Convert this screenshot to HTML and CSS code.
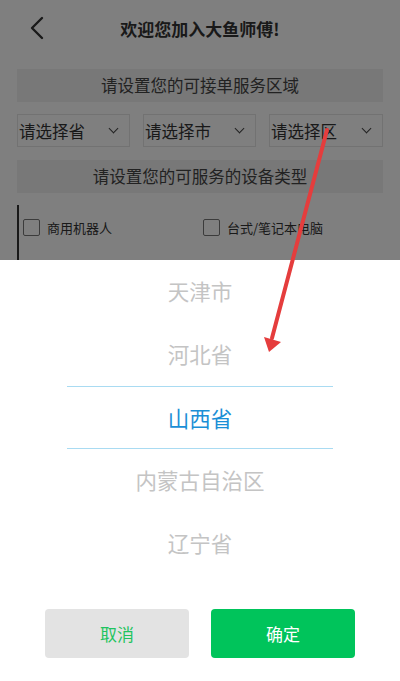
FILE: index.html
```html
<!DOCTYPE html>
<html lang="zh-CN">
<head>
    <meta charset="UTF-8">
    <meta name="viewport" content="width=device-width, initial-scale=1.0">
    <title>欢迎您加入大鱼师傅</title>
    <link rel="stylesheet" href="styles.css">
</head>
<body>
    <div class="page">
        <div class="topbar">
            <svg class="back" width="24" height="24" viewBox="0 0 24 24">
                <path d="M17 2 L7 12 L17 22" fill="none" stroke="#333" stroke-width="2.4" stroke-linecap="round" stroke-linejoin="round"/>
            </svg>
            <h1>欢迎您加入大鱼师傅!</h1>
        </div>
        <div class="content">
            <div class="section-title">请设置您的可接单服务区域</div>
            <div class="selects">
                <div class="select"><span>请选择省</span><i class="arrow"></i></div>
                <div class="select"><span>请选择市</span><i class="arrow"></i></div>
                <div class="select"><span>请选择区</span><i class="arrow"></i></div>
            </div>
            <div class="section-title">请设置您的可服务的设备类型</div>
            <div class="devices">
                <label class="check"><span class="box"></span>商用机器人</label>
                <label class="check"><span class="box"></span>台式/笔记本电脑</label>
            </div>
        </div>
    </div>

    <!-- 遮罩 + 底部选择器 -->
    <div class="mask"></div>
    <div class="sheet">
        <ul class="wheel">
            <li>天津市</li>
            <li>河北省</li>
            <li class="active">山西省</li>
            <li>内蒙古自治区</li>
            <li>辽宁省</li>
        </ul>
        <div class="buttons">
            <button class="btn cancel">取消</button>
            <button class="btn ok">确定</button>
        </div>
    </div>

    <svg class="pointer" width="400" height="681" viewBox="0 0 400 681">
        <line x1="327" y1="130" x2="272" y2="338" stroke="#e53d3d" stroke-width="4" stroke-linecap="round"/>
        <polygon points="264,337 281,342 269,352" fill="#e53d3d"/>
    </svg>
</body>
</html>
```

FILE: styles.css
```css
body {
    margin: 0;
    padding: 0;
    font-family: "Noto Sans CJK SC", "Noto Sans", sans-serif;
    background-color: #fff;
    color: #333;
    height: 681px;
    overflow: hidden;
}
.topbar {
    height: 56px;
    display: flex;
    align-items: center;
    justify-content: center;
    position: relative;
}
.topbar .back {
    position: absolute;
    left: 25px;
    top: 16px;
}
.topbar h1 {
    margin: 0;
    font-size: 17px;
    font-weight: 600;
    color: #333;
}
.content {
    padding: 13px 17px 0;
}
.section-title {
    height: 33px;
    line-height: 33px;
    background-color: #f0f0f0;
    text-align: center;
    font-size: 16.5px;
    color: #444;
}
.selects {
    display: grid;
    grid-template-columns: 113px 113px 114px;
    column-gap: 13px;
    margin: 12px 0 13px;
}
.select {
    height: 31px;
    border: 1px solid #e4e4e4;
    display: flex;
    align-items: center;
    justify-content: space-between;
    padding: 0 12px 0 1px;
    font-size: 16.5px;
    color: #333;
}
.arrow {
    width: 6px;
    height: 6px;
    border-right: 1.5px solid #444;
    border-bottom: 1.5px solid #444;
    transform: rotate(45deg);
    margin-top: -4px;
}
.devices {
    margin-top: 12px;
    border-left: 2px solid #333;
    height: 80px;
    display: flex;
    padding-top: 14px;
}
.check {
    display: flex;
    align-items: flex-start;
    font-size: 13px;
    color: #333;
    width: 180px;
    line-height: 17px;
}
.check:first-child {
    padding-left: 4px;
}
.box {
    width: 15px;
    height: 15px;
    border: 1.5px solid #777;
    border-radius: 2px;
    margin-right: 7px;
}
.mask {
    position: fixed;
    left: 0;
    top: 0;
    right: 0;
    bottom: 0;
    background-color: rgba(0, 0, 0, 0.5);
}
.sheet {
    position: fixed;
    left: 0;
    right: 0;
    bottom: 0;
    height: 421px;
    background-color: #fff;
}
.wheel {
    list-style-type: none;
    margin: 0;
    padding: 0;
}
.wheel li {
    height: 63px;
    line-height: 62px;
    text-align: center;
    font-size: 21.5px;
    color: #c4c4c4;
}
.wheel li.active {
    color: #1a8fd6;
    border-top: 1px solid #a9dbf2;
    border-bottom: 1px solid #a9dbf2;
    height: 61px;
    line-height: 61px;
    margin: 0 67px;
}
.buttons {
    display: flex;
    justify-content: center;
    gap: 22px;
    margin-top: 34px;
}
.btn {
    width: 144px;
    height: 49px;
    border: none;
    border-radius: 4px;
    font-family: inherit;
    font-size: 17px;
}
.cancel {
    background-color: #e3e3e3;
    color: #1fc460;
}
.ok {
    background-color: #00c45b;
    color: #fff;
}
.pointer {
    position: fixed;
    left: 0;
    top: 0;
    pointer-events: none;
}
```
